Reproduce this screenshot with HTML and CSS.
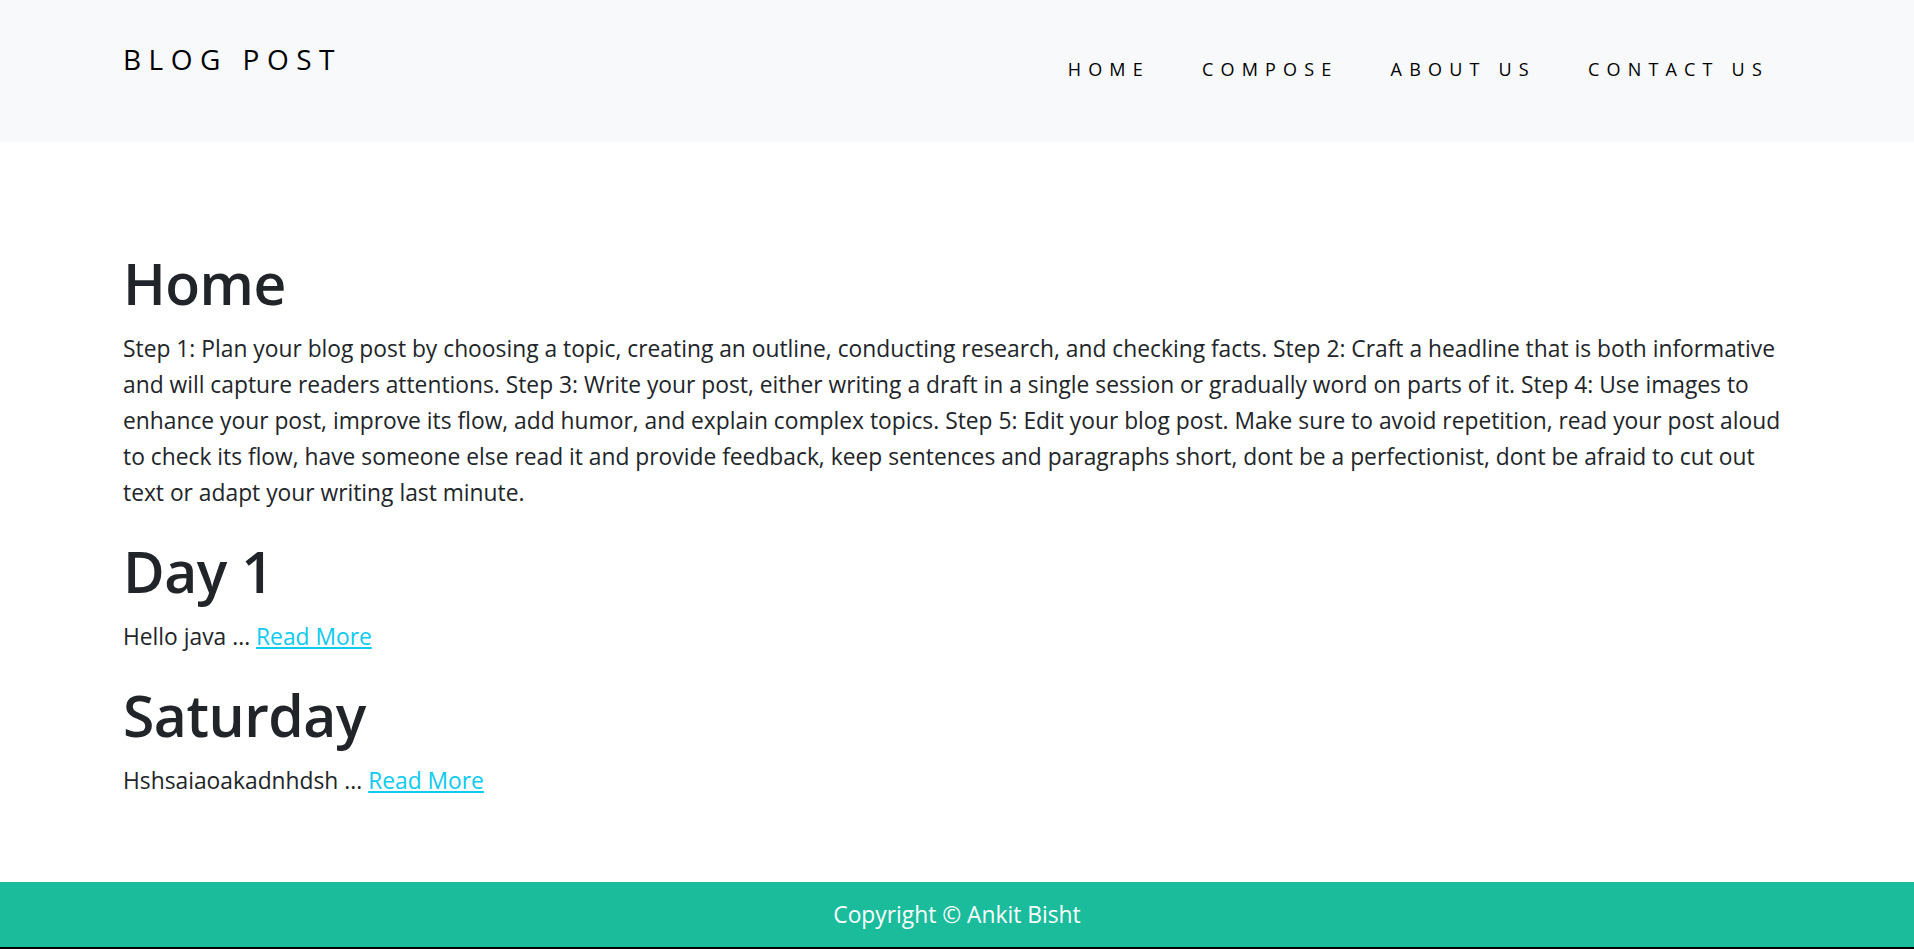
FILE: index.html
```html
<!DOCTYPE html>
<html lang="en">
<head>
<meta charset="utf-8">
<title>Blog Post</title>
<link rel="stylesheet" href="styles.css">
</head>
<body>
<header class="site-header">
  <a class="brand" href="#">BLOG POST</a>
  <nav class="nav">
    <a class="nav-link" href="#">HOME</a>
    <a class="nav-link" href="#">COMPOSE</a>
    <a class="nav-link" href="#">ABOUT US</a>
    <a class="nav-link" href="#">CONTACT US</a>
  </nav>
</header>
<main class="content">
  <h1 class="title">Home</h1>
  <p class="text">Step 1: Plan your blog post by choosing a topic, creating an outline, conducting research, and checking facts. Step 2: Craft a headline that is both informative and will capture readers attentions. Step 3: Write your post, either writing a draft in a single session or gradually word on parts of it. Step 4: Use images to enhance your post, improve its flow, add humor, and explain complex topics. Step 5: Edit your blog post. Make sure to avoid repetition, read your post aloud to check its flow, have someone else read it and provide feedback, keep sentences and paragraphs short, dont be a perfectionist, dont be afraid to cut out text or adapt your writing last minute.</p>
  <h1 class="title">Day 1</h1>
  <p class="text">Hello java ... <a class="more" href="#">Read More</a></p>
  <h1 class="title">Saturday</h1>
  <p class="text">Hshsaiaoakadnhdsh ... <a class="more" href="#">Read More</a></p>
</main>
<footer class="footer">
  <p class="copy">Copyright © Ankit Bisht</p>
</footer>
</body>
</html>
```

FILE: styles.css
```css
* { box-sizing: border-box; }

html, body {
  margin: 0;
  padding: 0;
}

body {
  font-family: "Open Sans", "Noto Sans", sans-serif;
  color: #212529;
  background: #fff;
}

.site-header {
  background: #f8f9fa;
  height: 142px;
  display: flex;
  justify-content: space-between;
  align-items: flex-start;
  padding: 0 145px 0 123px;
}

.brand {
  margin-top: 37px;
  font-size: 28px;
  line-height: 45px;
  letter-spacing: 7.5px;
  color: #000;
  text-decoration: none;
}

.nav {
  margin-top: 56px;
  display: flex;
  gap: 52px;
}

.nav-link {
  font-size: 18px;
  line-height: 27px;
  letter-spacing: 7.2px;
  color: #000;
  text-decoration: none;
}

.content {
  padding: 105px 114px 59px 123px;
}

.title {
  font-size: 57px;
  line-height: 72px;
  font-weight: 600;
  letter-spacing: -0.5px;
  margin: 0 0 12px;
  color: #212529;
}

.text {
  font-size: 22.8px;
  line-height: 36px;
  margin: 0 0 24px;
}

.more {
  color: #0dcaf0;
  text-decoration: underline;
}

.footer {
  background: #1abc9c;
  height: 67px;
  padding-top: 15px;
  border-bottom: 2px solid #000;
  text-align: center;
}

.copy {
  margin: 0;
  font-size: 22.8px;
  line-height: 36px;
  color: #fff;
}
```
